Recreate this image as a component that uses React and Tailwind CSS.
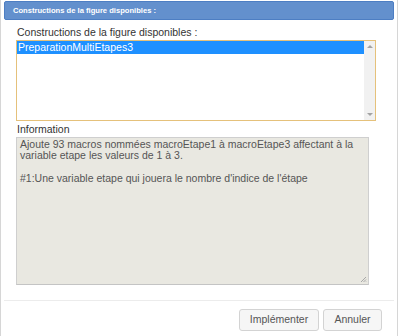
import React from "react"

export default function App() {
  const font = { fontFamily: '"Liberation Sans", Arial, sans-serif' }

  return (
    <div className="w-[400px] h-[336px] bg-white overflow-hidden" style={font}>
      <div className="w-[398px] h-[336px] border-x border-[#d6d6d6] flex flex-col">
        <div className="mx-[3px] mt-[1px] h-[19px] bg-[#6390cd] border border-[#4d7ec3] rounded-[2px] flex items-center pl-[8px]">
          <span className="text-white font-bold text-[7.6px]">Constructions de la figure disponibles :</span>
        </div>

        <div className="px-[15px] pt-[6px] flex flex-col">
          <label className="text-[10.5px] leading-[12px] text-[#333] pl-[1px]">
            Constructions de la figure disponibles :
          </label>
          <div className="mt-[2px] w-[360px] h-[81px] border border-[#e5c17b] flex">
            <div className="flex-1">
              <div className="bg-[#1e90ff] text-white text-[10.5px] leading-[13px] pl-[1px]">
                PreparationMultiEtapes3
              </div>
            </div>
            <div className="w-[11px] bg-[#f1f1f1] flex flex-col justify-between items-center py-[4px]">
              <div className="w-0 h-0 border-x-[3px] border-x-transparent border-b-[3px] border-b-[#a3a3a3]" />
              <div className="w-0 h-0 border-x-[3px] border-x-transparent border-t-[3px] border-t-[#a3a3a3]" />
            </div>
          </div>

          <label className="mt-[2px] text-[10.5px] leading-[12px] text-[#333] pl-[1px]">Information</label>
          <div className="relative mt-[2px] w-[353px] h-[148px] bg-[#e9e8e1] border border-[#cfcfcf] border-b-[#c4c4c4] px-[3px] pt-[1px] text-[10.5px] leading-[11px] text-[#555]">
            <p>Ajoute 93 macros nommées macroEtape1 à macroEtape3 affectant à la variable etape les valeurs de 1 à 3.</p>
            <p className="mt-[12px]">#1:Une variable etape qui jouera le nombre d'indice de l'étape</p>
            <svg className="absolute right-[1px] bottom-[1px]" width="7" height="7" viewBox="0 0 7 7">
              <path d="M6 1 L1 6 M6 3.5 L3.5 6 M6 5.5 L5.5 6" stroke="#a8a8a8" strokeWidth="1" />
            </svg>
          </div>
        </div>

        <div className="mt-[15px] mx-[3px] h-[1px] bg-[#ececec]" />

        <div className="flex justify-end gap-[4px] pr-[15px] pt-[8px]">
          <button className="w-[80px] h-[22px] bg-[#f6f6f6] border border-[#d3d3d3] rounded-[3px] text-[10.5px] text-[#555]">
            Implémenter
          </button>
          <button className="w-[59px] h-[22px] bg-[#f6f6f6] border border-[#d3d3d3] rounded-[3px] text-[10.5px] text-[#555]">
            Annuler
          </button>
        </div>
      </div>
    </div>
  )
}
